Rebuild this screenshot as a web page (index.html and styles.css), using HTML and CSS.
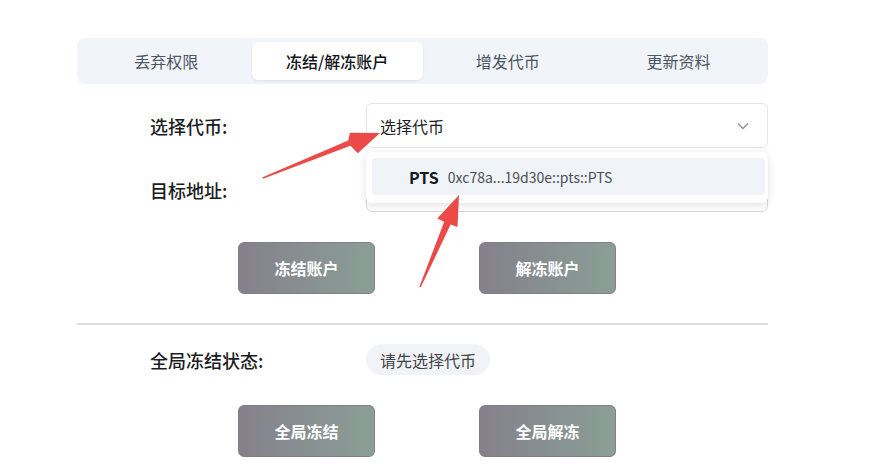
FILE: index.html
```html
<!DOCTYPE html>
<html lang="zh-CN">
<head>
<meta charset="utf-8">
<link rel="stylesheet" href="styles.css">
</head>
<body>
<div class="page">
  <div class="panel">
    <div class="tabs">
      <div class="tab">丢弃权限</div>
      <div class="tab active">冻结/解冻账户</div>
      <div class="tab">增发代币</div>
      <div class="tab">更新资料</div>
    </div>

    <div class="form">
      <div class="row">
        <div class="label">选择代币:</div>
        <div class="field-wrap">
          <div class="select">
            <span>选择代币</span>
            <svg class="chev" width="12" height="8" viewBox="0 0 12 8"><path d="M1 1.5 L6 6.5 L11 1.5" fill="none" stroke="#8a8f98" stroke-width="1.3"/></svg>
          </div>
          <div class="menu">
            <div class="menu-item"><b>PTS</b><span class="addr">0xc78a...19d30e::pts::PTS</span></div>
          </div>
        </div>
      </div>
      <div class="row">
        <div class="label">目标地址:</div>
        <div class="field-wrap"><div class="input"></div></div>
      </div>
      <div class="btns">
        <button class="btn">冻结账户</button>
        <button class="btn">解冻账户</button>
      </div>
    </div>

    <div class="divider"></div>

    <div class="form">
      <div class="row status-row">
        <div class="label">全局冻结状态:</div>
        <div class="pill">请先选择代币</div>
      </div>
      <div class="btns">
        <button class="btn">全局冻结</button>
        <button class="btn">全局解冻</button>
      </div>
    </div>
  </div>

  <svg class="arrows" width="875" height="471" viewBox="0 0 875 471">
    <polygon fill="#ec4a48" points="263,178.8 350.4,145.8 357.8,153.3 380,133 349.9,132.8 348.2,140.6 262.6,177.2"/>
    <polygon fill="#ec4a48" points="420.8,287.3 450.6,224.6 457.5,227 459,195 437.3,218.4 444.2,221.8 419.4,286.7"/>
  </svg>
</div>
</body>
</html>
```

FILE: styles.css
```css
* { box-sizing: border-box; }
html, body {
  margin: 0;
  padding: 0;
  background: #ffffff;
  font-family: "Noto Sans CJK SC", "Noto Sans", sans-serif;
  color: #1f2328;
}
.page {
  position: relative;
  width: 875px;
  height: 471px;
  overflow: hidden;
}
.panel {
  width: 691px;
  margin-left: 77px;
  padding-top: 38px;
}
.tabs {
  display: flex;
  height: 46px;
  padding: 4px;
  background: #f1f4f8;
  border-radius: 8px;
}
.tab {
  flex: 1;
  display: flex;
  align-items: center;
  justify-content: center;
  font-size: 16px;
  color: #4b5563;
  border-radius: 6px;
}
.tab.active {
  background: #ffffff;
  color: #111318;
  font-weight: 500;
  box-shadow: 0 1px 3px rgba(0, 0, 0, 0.08);
}
.form {
  display: flex;
  flex-direction: column;
}
.row {
  display: flex;
  align-items: center;
  margin-top: 19px;
  padding-left: 73px;
}
.label {
  width: 216px;
  font-size: 18px;
  font-weight: 500;
  color: #1b1d22;
}
.field-wrap {
  position: relative;
  flex: 1;
}
.select, .input {
  height: 45px;
  border: 1px solid #e3e5e9;
  border-radius: 6px;
  background: #fff;
  display: flex;
  align-items: center;
  justify-content: space-between;
  padding: 0 18px 0 13px;
  font-size: 16px;
  color: #1b1d22;
}
.input {
  border-color: #d6d8dc;
}
.menu {
  position: absolute;
  z-index: 2;
  left: 0;
  right: 0;
  top: 49px;
  background: #fff;
  border-radius: 6px;
  padding: 6px 3px 8px 6px;
  box-shadow: 0 2px 8px rgba(0, 0, 0, 0.12);
}
.menu-item {
  height: 37px;
  background: #f0f3f8;
  border-radius: 4px;
  display: flex;
  align-items: center;
  padding-left: 37px;
}
.menu-item b {
  font-size: 16px;
  font-weight: 700;
  color: #15171b;
  margin-right: 9px;
}
.addr {
  font-size: 14px;
  color: #4a4f57;
}
.btns {
  display: flex;
  justify-content: center;
  gap: 104px;
  padding-left: 9px;
  margin-top: 30px;
}
.btn {
  width: 137px;
  height: 52px;
  border: 1px solid #7f7f86;
  border-radius: 6px;
  background: linear-gradient(90deg, #85808b, #8a9f96);
  color: #ffffff;
  font-family: "Noto Sans CJK SC", "Noto Sans", sans-serif;
  font-size: 16px;
  font-weight: 700;
}
.divider {
  height: 2px;
  background: #dedfe1;
  margin-top: 29px;
}
.status-row {
  margin-top: 19px;
}
.pill {
  height: 31px;
  padding: 0 14px;
  border-radius: 16px;
  background: #f1f3f6;
  display: flex;
  align-items: center;
  font-size: 16px;
  color: #3f444b;
}
.arrows {
  position: absolute;
  left: 0;
  top: 0;
  z-index: 5;
  pointer-events: none;
}
```
